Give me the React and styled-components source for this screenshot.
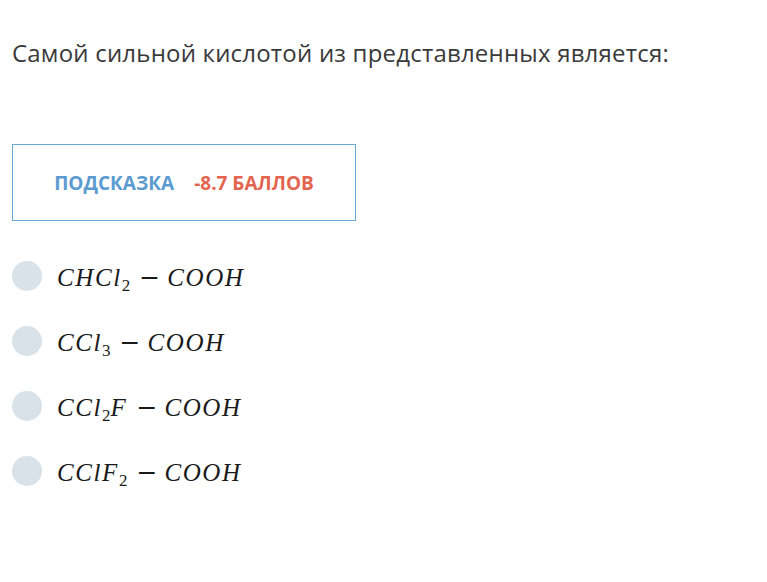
import React from "react";
import styled, { createGlobalStyle } from "styled-components";

const Global = createGlobalStyle`
  body {
    margin: 0;
    background: #fff;
    font-family: "Open Sans", "Liberation Sans", sans-serif;
  }
`;

const Page = styled.div`
  padding: 36px 12px 0 12px;
`;

const Question = styled.h1`
  margin: 0;
  font-size: 24px;
  font-weight: 400;
  color: #3a3a3a;
  line-height: 34px;
  letter-spacing: 0.2px;
`;

const HintBox = styled.div`
  margin-top: 74px;
  width: 342px;
  height: 75px;
  border: 1.5px solid #6aa8d8;
  display: flex;
  align-items: center;
  justify-content: center;
  gap: 20px;
  font-size: 19px;
  font-weight: 700;
`;

const HintLabel = styled.span`
  color: ${(p) => p.color};
`;

const Options = styled.div`
  margin-top: 38px;
  display: flex;
  flex-direction: column;
  gap: 31px;
`;

const Option = styled.label`
  display: flex;
  align-items: center;
  gap: 15px;
  height: 34px;
  cursor: pointer;
`;

const Radio = styled.span`
  width: 30px;
  height: 30px;
  border-radius: 50%;
  background: #d9e2e9;
  flex-shrink: 0;
`;

const Formula = styled.span`
  font-family: "Liberation Serif", "DejaVu Serif", serif;
  font-size: 25px;
  color: #1a1a1a;
  font-style: italic;
  letter-spacing: 1.6px;
  white-space: nowrap;
  transform: translateY(1px);
`;

const Sub = styled.sub`
  font-style: normal;
  font-size: 17px;
  vertical-align: -5px;
  line-height: 0;
  letter-spacing: 0;
`;

const Op = styled.span`
  font-family: "DejaVu Serif", serif;
  font-style: normal;
  font-weight: 300;
  letter-spacing: 0;
  margin: 0 7px 0 9px;
`;

const options = [
  ["CHCl", "2", ""],
  ["CCl", "3", ""],
  ["CCl", "2", "F"],
  ["CClF", "2", ""],
];

export default function App() {
  return (
    <Page>
      <Global />
      <Question>Самой сильной кислотой из представленных является:</Question>
      <HintBox>
        <HintLabel color="#5b9bd0">ПОДСКАЗКА</HintLabel>
        <HintLabel color="#e4644f">-8.7 БАЛЛОВ</HintLabel>
      </HintBox>
      <Options>
        {options.map(([a, s, b], i) => (
          <Option key={i}>
            <Radio />
            <Formula>
              {a}
              <Sub>{s}</Sub>
              {b}
              <Op>−</Op>
              COOH
            </Formula>
          </Option>
        ))}
      </Options>
    </Page>
  );
}
